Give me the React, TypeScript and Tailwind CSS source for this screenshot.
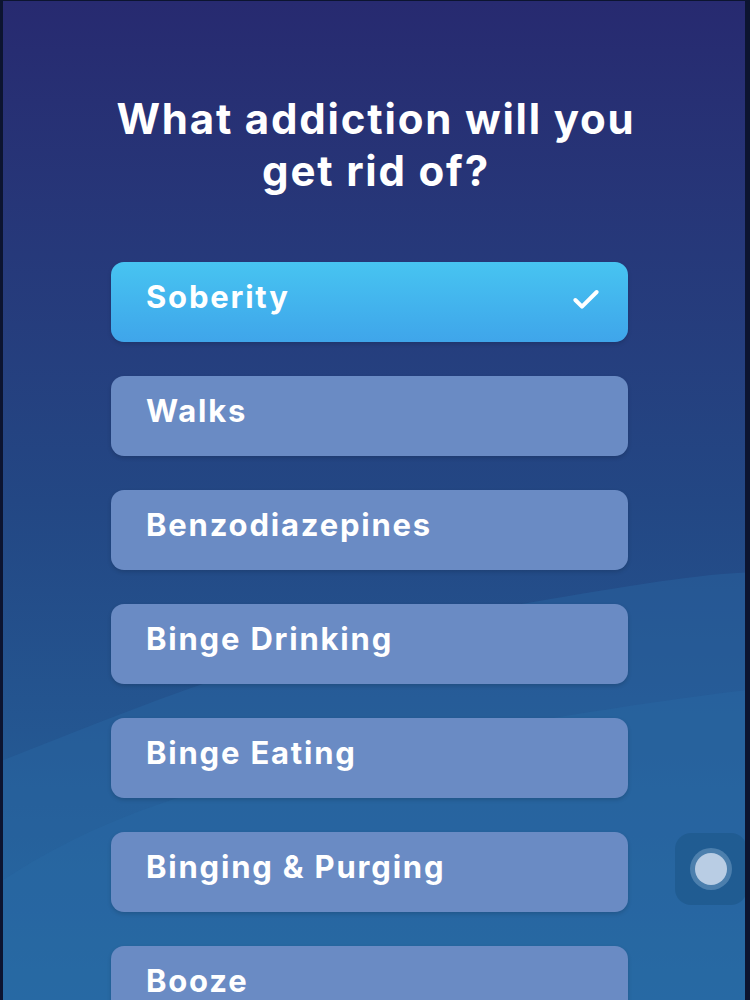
import { Check } from 'lucide-react'

const OPTIONS = [
  'Soberity',
  'Walks',
  'Benzodiazepines',
  'Binge Drinking',
  'Binge Eating',
  'Binging & Purging',
  'Booze',
]

export default function App() {
  const selected = 'Soberity'

  return (
    <div
      className="relative h-[1000px] w-[750px] overflow-hidden border-l-[3px] border-r-[5px] border-t border-[#0c1430] bg-gradient-to-b from-[#272a70] via-[#234784] to-[#2468a0]"
      style={{ fontFamily: 'Inter, "Noto Sans", sans-serif' }}
    >
      {/* background waves */}
      <svg className="absolute inset-0 h-full w-full" viewBox="0 0 742 1000" preserveAspectRatio="none">
        <path d="M0 760 C 150 700, 300 640, 480 610 C 600 590, 680 575, 742 572 L742 1000 L0 1000 Z" fill="#2a6aa6" opacity="0.4" />
        <path d="M0 880 C 120 800, 260 770, 420 740 C 560 715, 660 700, 742 690 L742 1000 L0 1000 Z" fill="#2a6ea8" opacity="0.3" />
      </svg>

      <div className="relative flex flex-col pl-[108px] pt-[92px]">
        <h1 className="w-[530px] text-center text-[42px] font-bold leading-[52px] tracking-[1.8px] text-white">
          What addiction will you get rid of?
        </h1>

        <div className="mt-[65px] flex w-[517px] flex-col gap-[34px]">
          {OPTIONS.map((opt) => {
            const isSel = opt === selected
            return (
              <div
                key={opt}
                className={
                  isSel
                    ? 'flex h-[80px] shrink-0 items-center justify-between rounded-[13px] bg-gradient-to-b from-[#47c4f1] to-[#3fa5ea] pl-[35px] pr-[26px] shadow-[0_2px_4px_rgba(0,0,0,0.15)]'
                    : 'flex h-[80px] shrink-0 items-center justify-between rounded-[13px] bg-[#6a8bc4] pl-[35px] pr-[26px] shadow-[0_2px_4px_rgba(0,0,0,0.15)]'
                }
              >
                <span className="-mt-[10px] text-[31px] font-bold tracking-[1.8px] text-white">{opt}</span>
                {isSel && <Check className="-mt-[4px] h-[32px] w-[32px] text-white" strokeWidth={3} />}
              </div>
            )
          })}
        </div>
      </div>

      {/* floating assistive button */}
      <div className="absolute left-[672px] top-[832px] flex h-[72px] w-[72px] items-center justify-center rounded-[16px] bg-[#1f5a8e]/80">
        <div className="flex h-[42px] w-[42px] items-center justify-center rounded-full bg-[#8fb3d6]/40">
          <div className="h-[32px] w-[32px] rounded-full bg-[#b9cde4]" />
        </div>
      </div>
    </div>
  )
}
